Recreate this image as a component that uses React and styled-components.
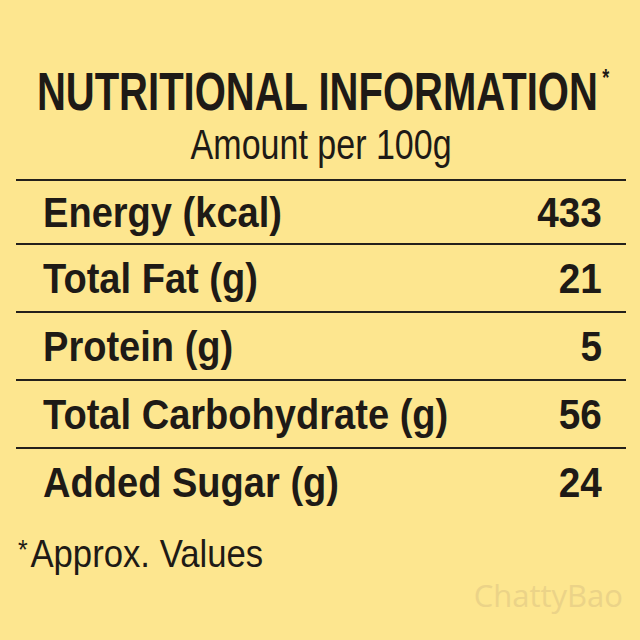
import React from "react";
import styled, { createGlobalStyle } from "styled-components";

const GlobalStyle = createGlobalStyle`
  html, body {
    margin: 0;
    padding: 0;
    background: #fde68f;
  }
`;

const nutrients = [
  { label: "Energy (kcal)", value: "433" },
  { label: "Total Fat (g)", value: "21" },
  { label: "Protein (g)", value: "5" },
  { label: "Total Carbohydrate (g)", value: "56" },
  { label: "Added Sugar (g)", value: "24" },
];

function App() {
  return (
    <>
      <GlobalStyle />
      <Page>
        <Title>
          <Condensed $scale={0.755} $origin="center">
            NUTRITIONAL INFORMATION<Star>*</Star>
          </Condensed>
        </Title>
        <Subtitle>
          <Condensed $scale={0.81} $origin="center">Amount per 100g</Condensed>
        </Subtitle>
        <Table>
          {nutrients.map((item, index) => (
            <Row key={item.label} $first={index === 0}>
              <Condensed $scale={0.885} $origin="left">{item.label}</Condensed>
              <Condensed $scale={0.9} $origin="right">{item.value}</Condensed>
            </Row>
          ))}
        </Table>
        <Footnote>
          <Condensed $scale={0.89} $origin="left">
            <FootStar>*</FootStar>Approx. Values
          </Condensed>
        </Footnote>
        <Watermark>ChattyBao</Watermark>
      </Page>
    </>
  );
}

export default App;

const Page = styled.div`
  position: relative;
  width: 640px;
  height: 640px;
  box-sizing: border-box;
  padding: 65px 14px 0 16px;
  background: #fde68f;
  color: #1e1a16;
  font-family: "Liberation Sans", Arial, sans-serif;
  overflow: hidden;
`;

// the printed label uses a condensed face; squeeze the regular one to match
const Condensed = styled.span`
  display: inline-block;
  white-space: nowrap;
  transform: scaleX(${(p) => p.$scale});
  transform-origin: ${(p) => p.$origin} center;
`;

const Title = styled.h1`
  display: flex;
  justify-content: center;
  margin: 0;
  padding-left: 4px;
  font-size: 53px;
  line-height: 53px;
  font-weight: 700;
`;

const Star = styled.span`
  display: inline-block;
  margin-left: 6px;
  font-size: 24px;
  vertical-align: 24px;
  line-height: 0;
`;

const Subtitle = styled.div`
  display: flex;
  justify-content: center;
  margin-top: 6px;
  font-size: 42px;
  line-height: 42px;
  font-weight: 400;
`;

const Table = styled.div`
  margin-top: 13px;
  border-top: 2px solid #24201b;
  display: flex;
  flex-direction: column;
`;

const Row = styled.div`
  display: flex;
  justify-content: space-between;
  align-items: center;
  height: ${(p) => (p.$first ? "62px" : "66px")};
  padding: 0 24px 0 27px;
  font-size: 43px;
  line-height: ${(p) => (p.$first ? "62px" : "66px")};
  font-weight: 700;
  border-bottom: 2px solid #24201b;

  &:last-child {
    border-bottom: none;
  }
`;

const Footnote = styled.div`
  margin: 15px 0 0 2px;
  font-size: 39px;
  line-height: 39px;
  font-weight: 400;
`;

const FootStar = styled.span`
  display: inline-block;
  font-size: 28px;
  vertical-align: 8px;
  margin-right: 3px;
`;

const Watermark = styled.div`
  position: absolute;
  right: 17px;
  bottom: 24px;
  font-family: "Open Sans", "Noto Sans", sans-serif;
  font-size: 31px;
  font-weight: 400;
  letter-spacing: 0;
  color: #ebd388;
`;
